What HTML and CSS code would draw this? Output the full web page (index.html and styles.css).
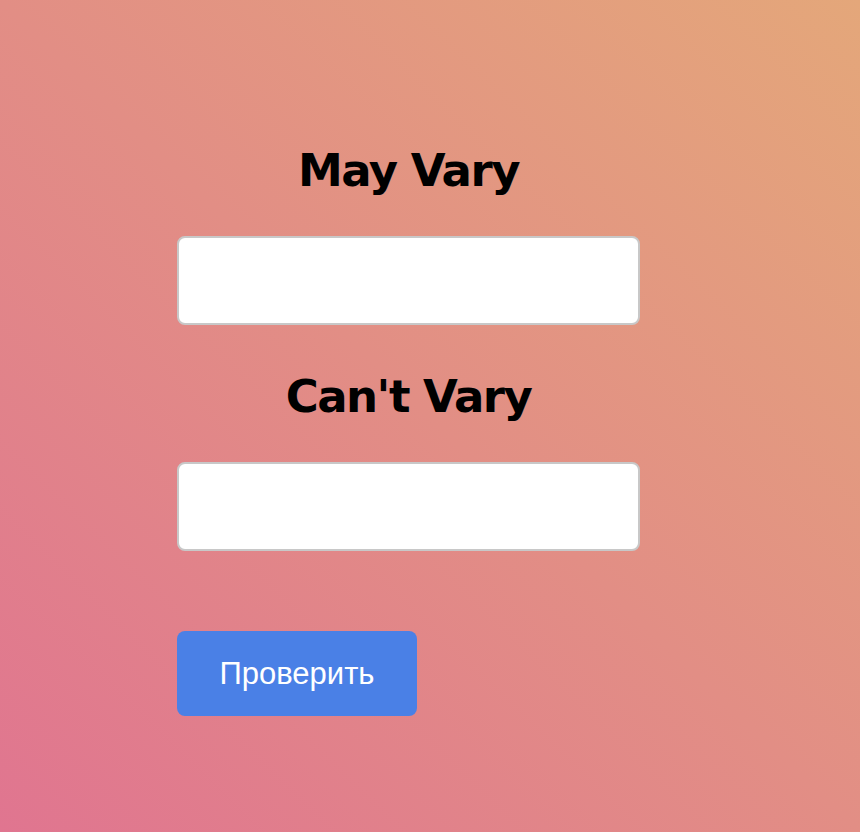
FILE: index.html
```html
<!DOCTYPE html>
<html>
<head>
<meta charset="utf-8">
<link rel="stylesheet" href="styles.css">
</head>
<body>
<div class="page">
  <form class="form">
    <h1 class="title">May Vary</h1>
    <input class="field" type="text">
    <h1 class="title">Can't Vary</h1>
    <input class="field" type="text">
    <button class="btn" type="button">Проверить</button>
  </form>
</div>
</body>
</html>
```
FILE: styles.css
```css
html, body {
  margin: 0;
  height: 100%;
}
body {
  background: linear-gradient(to top right, #e07590, #e4a77a);
}
.page {
  padding: 136px 0 0 177px;
}
.form {
  width: 463px;
  display: flex;
  flex-direction: column;
}
.title {
  margin: 0;
  text-align: center;
  font-family: "DejaVu Sans", Tahoma, sans-serif;
  font-weight: bold;
  font-size: 45px;
  line-height: 70px;
  color: #000;
  letter-spacing: -1.5px;
}
.title + .field {
  margin-top: 30px;
}
.field + .title {
  margin-top: 37px;
}
.field {
  box-sizing: border-box;
  height: 89px;
  width: 463px;
  border: 2px solid #c8c8c8;
  border-radius: 8px;
  background: #fff;
  margin: 0;
}
.field + .btn {
  margin-top: 80px;
}
.btn {
  width: 240px;
  height: 85px;
  background: #4a80e6;
  color: #fff;
  border: none;
  border-radius: 8px;
  font-family: "Liberation Sans", Arial, sans-serif;
  font-size: 31px;
  padding: 0;
}
```
